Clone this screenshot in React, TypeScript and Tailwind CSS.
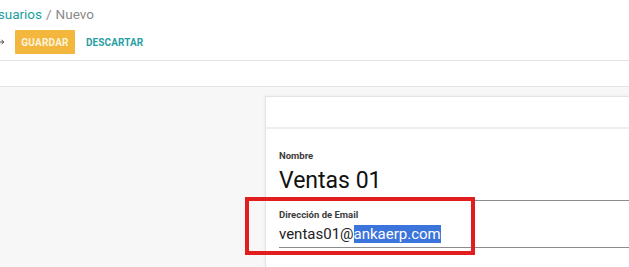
import React from 'react';

const FONT = { fontFamily: 'Roboto, "Liberation Sans", sans-serif' };

function ControlPanel() {
  return (
    <div className="h-[61px] border-b border-[#e2e2e2] bg-white">
      <div className="h-[30px] flex items-center text-[13.5px] leading-none ml-[-11px]">
        <span className="text-[#1a9fa0]">Usuarios</span>
        <span className="text-[#8a8a8a] mx-[4px]">/</span>
        <span className="text-[#8a8a8a]">Nuevo</span>
      </div>
      <div className="flex items-center h-[24px]">
        <svg width="15" height="6" viewBox="0 0 15 6" className="ml-[-9px] mr-[9px]" aria-label="→">
          <path d="M0 3h13M10.5 1l2.5 2-2.5 2" stroke="#555" strokeWidth="1" fill="none" />
        </svg>
        <button className="h-[24px] w-[60px] bg-[#f2b73c] text-[#fdf3dc] text-[10px] font-bold tracking-[0.2px] rounded-[1px]">
          GUARDAR
        </button>
        <button className="ml-[11px] text-[10px] font-bold text-[#2a9fa3] tracking-[0.1px]">DESCARTAR</button>
      </div>
    </div>
  );
}

function Field({ label, children, big }: { label: string; children: React.ReactNode; big?: boolean }) {
  return (
    <div className="pl-[13px]">
      <div className="text-[9.5px] font-bold text-[#3c3c3c] leading-none">{label}</div>
      <div className={big ? 'border-b border-[#8c8c8c] pt-[7px] pb-[7px]' : 'border-b border-[#8c8c8c] pt-[4px] pb-[2px]'}>
        {children}
      </div>
    </div>
  );
}

export default function App() {
  return (
    <div className="relative w-[629px] h-[267px] overflow-hidden bg-white" style={FONT}>
      <ControlPanel />
      <div className="h-[26px] border-b border-[#e4e4e4] bg-white" />
      <div className="h-[180px] bg-[#f7f7f7] pt-[9px] pl-[265px]">
        <div className="h-full bg-white border-l border-t border-[#e3e3e3] shadow-[0_0_4px_rgba(0,0,0,0.06)]">
          <div className="h-[32px] border-b-2 border-[#eeeeee]" />
          <div className="pt-[22px]">
            <Field label="Nombre" big>
              <div className="text-[23px] leading-[25px] text-[#111]">Ventas 01</div>
            </Field>
            <div className="h-[9px]" />
            <Field label="Dirección de Email">
              <div className="text-[15px] leading-[22px] text-[#222]">
                ventas01@<span className="bg-[#3b74db] text-white">ankaerp.com</span>
              </div>
            </Field>
          </div>
        </div>
      </div>
      <div className="absolute left-[245px] top-[197px] w-[230px] h-[58px] border-[4px] border-[#e21d1d]" />
    </div>
  );
}
